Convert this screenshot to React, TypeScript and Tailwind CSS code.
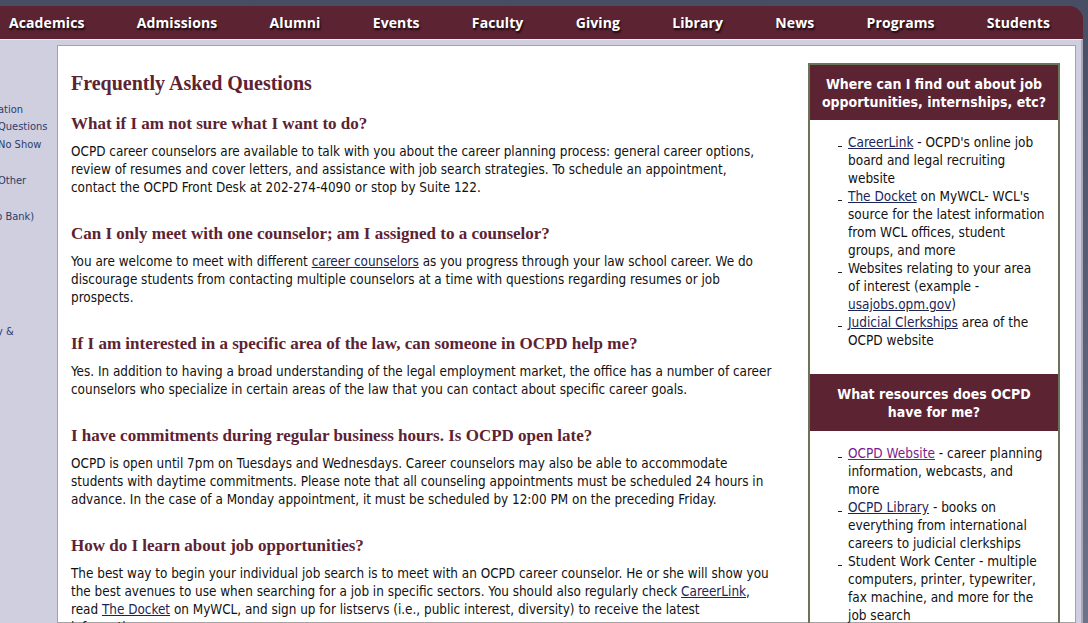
const body = { fontFamily: 'Tahoma, "DejaVu Sans Condensed", "Liberation Sans", sans-serif' };
const serif = { fontFamily: '"Liberation Serif", "Times New Roman", serif' };

const navItems = ["Academics", "Admissions", "Alumni", "Events", "Faculty", "Giving", "Library", "News", "Programs", "Students"];

function A({ children, visited }: { children: React.ReactNode; visited?: boolean }) {
  return (
    <a href="#" className={visited ? "text-[#7b1a8c] underline" : "text-[#1b2557] underline"}>
      {children}
    </a>
  );
}

function Q({ children }: { children: React.ReactNode }) {
  return (
    <h3 style={serif} className="mt-[27px] mb-[9px] text-[17px] leading-[20px] font-bold text-[#5c2333]">
      {children}
    </h3>
  );
}

function Item({ children }: { children: React.ReactNode }) {
  return (
    <li className="relative pl-[38px]">
      <span className="absolute left-[28px] top-[13px] w-[4px] h-[1px] bg-[#222]" />
      {children}
    </li>
  );
}

export default function App() {
  return (
    <div className="w-[1088px] h-[623px] overflow-hidden bg-gradient-to-b from-[#474d62] to-[#6c7288]" style={body}>
      <div className="h-[6px]" />
      <nav className="h-[33px] mr-[5px] bg-[#5c2333] rounded-tr-[14px] flex items-center justify-between pl-[9px] pr-[33px]">
        {navItems.map((n) => (
          <a
            key={n}
            href="#"
            className="text-white text-[14px] font-bold tracking-[0.1px] [text-shadow:1px_2px_2px_rgba(0,0,0,0.8)]"
            style={{ fontFamily: '"Open Sans", "DejaVu Sans", sans-serif' }}
          >
            {n}
          </a>
        ))}
      </nav>
      <div className="h-[584px] mr-[5px] bg-[#cfcfdf] border-t border-[#eeeef4] border-r-2 border-r-[#a8a8ba] flex">
        <aside className="w-[57px] shrink-0 overflow-hidden text-[11px] leading-[18px] text-[#2c3c6c] pt-[61px] whitespace-nowrap">
          <div className="ml-[-2px]">ation</div>
          <div className="ml-[-2px] -mt-[1px]">Questions</div>
          <div className="ml-[-2px]">No Show</div>
          <div className="ml-[-2px] mt-[18px]">Other</div>
          <div className="ml-[-4px] mt-[18px]">b Bank)</div>
          <div className="ml-[-3px] mt-[97px]">y &amp;</div>
        </aside>
        <main className="mt-[5px] w-[1019px] bg-white border border-[#a3a3a3] flex">
          <section className="w-[750px] shrink-0 pl-[13px] pr-[10px] pt-[25px] text-[13.4px] leading-[18px] text-[#111] whitespace-nowrap">
            <h1 style={serif} className="text-[20px] leading-[24px] font-bold text-[#5c2333] mb-[-8px]">
              Frequently Asked Questions
            </h1>
            <Q>What if I am not sure what I want to do?</Q>
            <p>
              OCPD career counselors are available to talk with you about the career planning process: general career options,
              <br />
              review of resumes and cover letters, and assistance with job search strategies. To schedule an appointment,
              <br />
              contact the OCPD Front Desk at 202-274-4090 or stop by Suite 122.
            </p>
            <Q>Can I only meet with one counselor; am I assigned to a counselor?</Q>
            <p>
              You are welcome to meet with different <A>career counselors</A> as you progress through your law school career. We do
              <br />
              discourage students from contacting multiple counselors at a time with questions regarding resumes or job
              <br />
              prospects.
            </p>
            <Q>If I am interested in a specific area of the law, can someone in OCPD help me?</Q>
            <p>
              Yes. In addition to having a broad understanding of the legal employment market, the office has a number of career
              <br />
              counselors who specialize in certain areas of the law that you can contact about specific career goals.
            </p>
            <Q>I have commitments during regular business hours. Is OCPD open late?</Q>
            <p>
              OCPD is open until 7pm on Tuesdays and Wednesdays. Career counselors may also be able to accommodate
              <br />
              students with daytime commitments. Please note that all counseling appointments must be scheduled 24 hours in
              <br />
              advance. In the case of a Monday appointment, it must be scheduled by 12:00 PM on the preceding Friday.
            </p>
            <Q>How do I learn about job opportunities?</Q>
            <p>
              The best way to begin your individual job search is to meet with an OCPD career counselor. He or she will show you
              <br />
              the best avenues to use when searching for a job in specific sectors. You should also regularly check <A>CareerLink</A>,
              <br />
              read <A>The Docket</A> on MyWCL, and sign up for listservs (i.e., public interest, diversity) to receive the latest
              <br />
              information.
            </p>
          </section>
          <div className="w-[252px] shrink-0 self-start mt-[17px] border-2 border-[#6b7358] text-[13.5px] leading-[18px] text-[#111] whitespace-nowrap">
            <div className="bg-[#5c2333] text-white font-bold text-[14px] text-center pt-[10px] pb-[9px]">
              Where can I find out about job
              <br />
              opportunities, internships, etc?
            </div>
            <ul className="pt-[13px] pb-[25px]">
              <Item>
                <A>CareerLink</A> - OCPD's online job
                <br />
                board and legal recruiting
                <br />
                website
              </Item>
              <Item>
                <A>The Docket</A> on MyWCL- WCL's
                <br />
                source for the latest information
                <br />
                from WCL offices, student
                <br />
                groups, and more
              </Item>
              <Item>
                Websites relating to your area
                <br />
                of interest (example -
                <br />
                <A>usajobs.opm.gov</A>)
              </Item>
              <Item>
                <A>Judicial Clerkships</A> area of the
                <br />
                OCPD website
              </Item>
            </ul>
            <div className="bg-[#5c2333] text-white font-bold text-[14px] text-center pt-[11px] pb-[10px]">
              What resources does OCPD
              <br />
              have for me?
            </div>
            <ul className="pt-[13px] pb-[20px]">
              <Item>
                <A visited>OCPD Website</A> - career planning
                <br />
                information, webcasts, and
                <br />
                more
              </Item>
              <Item>
                <A>OCPD Library</A> - books on
                <br />
                everything from international
                <br />
                careers to judicial clerkships
              </Item>
              <Item>
                Student Work Center - multiple
                <br />
                computers, printer, typewriter,
                <br />
                fax machine, and more for the
                <br />
                job search
              </Item>
            </ul>
          </div>
        </main>
      </div>
    </div>
  );
}
